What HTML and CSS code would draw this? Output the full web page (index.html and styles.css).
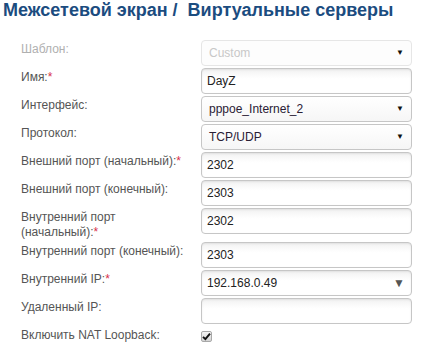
FILE: index.html
```html
<!DOCTYPE html>
<html lang="ru">

<head>
    <meta charset="UTF-8">
    <meta name="viewport" content="width=device-width, initial-scale=1.0">
    <title>Виртуальные серверы</title>
    <link rel="stylesheet" href="styles.css">
</head>

<body>
    <h1 class="page-title">Межсетевой экран /&nbsp; Виртуальные серверы</h1>

    <form class="vs-form">
        <div class="row">
            <label class="row-label disabled">Шаблон:</label>
            <div class="field select disabled">Custom<span class="arrow">▼</span></div>
        </div>
        <div class="row">
            <label class="row-label">Имя:<span class="req">*</span></label>
            <div class="field">DayZ</div>
        </div>
        <div class="row">
            <label class="row-label">Интерфейс:</label>
            <div class="field select">pppoe_Internet_2<span class="arrow">▼</span></div>
        </div>
        <div class="row">
            <label class="row-label">Протокол:</label>
            <div class="field select">TCP/UDP<span class="arrow">▼</span></div>
        </div>
        <div class="row">
            <label class="row-label">Внешний порт (начальный):<span class="req">*</span></label>
            <div class="field">2302</div>
        </div>
        <div class="row">
            <label class="row-label">Внешний порт (конечный):</label>
            <div class="field">2303</div>
        </div>
        <div class="row">
            <label class="row-label">Внутренний порт (начальный):<span class="req">*</span></label>
            <div class="field">2302</div>
        </div>
        <div class="row">
            <label class="row-label">Внутренний порт (конечный):</label>
            <div class="field">2303</div>
        </div>
        <div class="row">
            <label class="row-label">Внутренний IP:<span class="req">*</span></label>
            <div class="field combo">192.168.0.49<span class="arrow big">▼</span></div>
        </div>
        <div class="row">
            <label class="row-label">Удаленный IP:</label>
            <div class="field"></div>
        </div>
        <div class="row">
            <label class="row-label">Включить NAT Loopback:</label>
            <span class="checkbox">
                <svg width="9" height="9" viewBox="0 0 9 9">
                    <path d="M1 4.8 L3.4 7.2 L8 1.6" fill="none" stroke="#111" stroke-width="1.9" />
                </svg>
            </span>
        </div>
    </form>
</body>

</html>
```

FILE: styles.css
```css
body {
    margin: 0;
    background-color: #fff;
    font-family: "Liberation Sans", Arial, sans-serif;
}

.page-title {
    margin: 0;
    padding-left: 3px;
    font-size: 18px;
    line-height: 21px;
    font-weight: bold;
    color: #1b4c7f;
}

.vs-form {
    margin-top: 19px;
    padding-left: 21px;
}

.row {
    display: flex;
    align-items: flex-start;
    margin-bottom: 2px;
}

.row-label {
    box-sizing: border-box;
    width: 180px;
    padding-top: 2px;
    padding-right: 10px;
    font-size: 12px;
    line-height: 15px;
    color: #555;
}

.row-label.disabled {
    color: #b0b0b0;
}

.req {
    color: #d8304a;
}

.field {
    position: relative;
    box-sizing: border-box;
    width: 211px;
    height: 26px;
    padding: 0 5px;
    border: 1px solid #c6c6c6;
    border-radius: 4px;
    background: linear-gradient(#f2f2f2, #fff 40%);
    box-shadow: inset 0 1px 2px rgba(0, 0, 0, 0.08);
    font-size: 12px;
    line-height: 24px;
    color: #222;
}

.field.select {
    padding-left: 7px;
    background: linear-gradient(#fff, #f6f6f6);
    box-shadow: none;
    color: #2a2035;
}

.field.disabled {
    border-color: #e6e6e6;
    background: #fdfdfd;
    color: #c8c8c8;
}

.arrow {
    position: absolute;
    right: 7px;
    top: 0;
    font-size: 8px;
    color: #111;
}

.arrow.big {
    right: 6px;
    font-size: 12px;
    color: #555;
}

.checkbox {
    display: flex;
    align-items: center;
    justify-content: center;
    box-sizing: border-box;
    width: 11px;
    height: 11px;
    margin-top: 5px;
    border: 1px solid #a8a8a8;
    border-radius: 2px;
    background: linear-gradient(#f4f4f4, #d4d4d4);
}
```
